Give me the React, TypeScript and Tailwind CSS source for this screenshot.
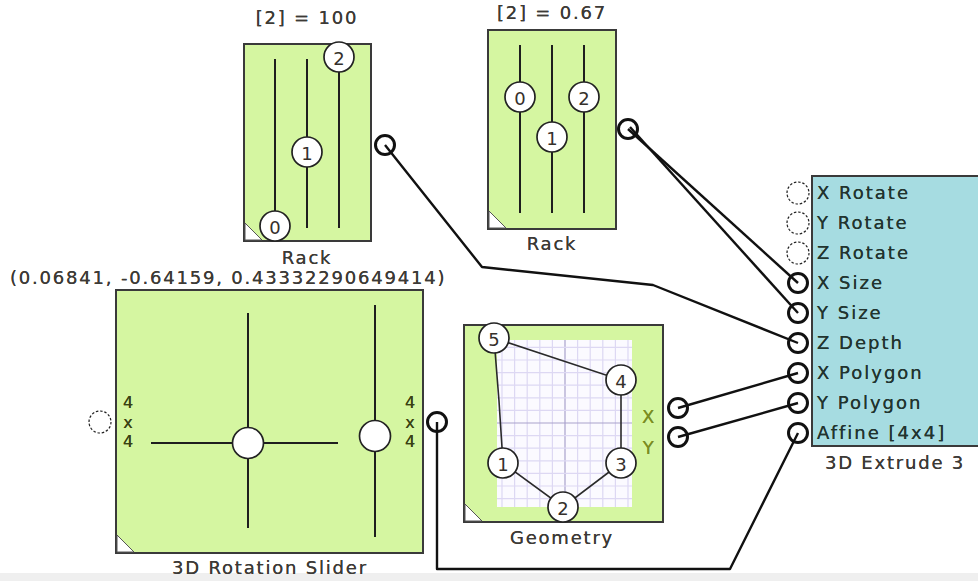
import React from "react";

const SVGFONT = "DejaVu Sans, Verdana, sans-serif";

function Knob({ x, y, label, r = 15 }: { x: number; y: number; label?: string; r?: number }) {
  return (
    <g>
      <circle cx={x} cy={y} r={r} fill="#ffffff" stroke="#222222" strokeWidth={1.7} />
      {label ? (
        <text x={x} y={y + 1} textAnchor="middle" dominantBaseline="central" fontSize={18} fill="#35302b" fontFamily={SVGFONT}>
          {label}
        </text>
      ) : null}
    </g>
  );
}

function Corner({ h }: { h: number }) {
  return <path d={`M0 ${h - 17} L17 ${h} L0 ${h} Z`} fill="#ffffff" stroke="#555555" strokeWidth={1} />;
}

function SliderLine({ x, y1, y2 }: { x: number; y1: number; y2: number }) {
  return <line x1={x} y1={y1} x2={x} y2={y2} stroke="#1e1e1e" strokeWidth={2} />;
}

function Rack1() {
  return (
    <div className="absolute left-[243px] top-[43px] w-[129px] h-[199px] border-2 border-[#3a3a3a] bg-[#d5f6a1]">
      <svg width={125} height={195} className="absolute left-0 top-0 overflow-visible">
        <Corner h={195} />
        <SliderLine x={30} y1={14} y2={183} />
        <SliderLine x={62} y1={14} y2={183} />
        <SliderLine x={94} y1={14} y2={183} />
        <Knob x={94} y={12} label="2" />
        <Knob x={62} y={107} label="1" />
        <Knob x={30} y={181} label="0" />
      </svg>
    </div>
  );
}

function Rack2() {
  return (
    <div className="absolute left-[487px] top-[29px] w-[130px] h-[201px] border-2 border-[#3a3a3a] bg-[#d5f6a1]">
      <svg width={126} height={197} className="absolute left-0 top-0 overflow-visible">
        <Corner h={197} />
        <SliderLine x={31} y1={14} y2={182} />
        <SliderLine x={63} y1={14} y2={182} />
        <SliderLine x={95} y1={14} y2={182} />
        <Knob x={31} y={66} label="0" />
        <Knob x={63} y={106} label="1" />
        <Knob x={95} y={66} label="2" />
      </svg>
    </div>
  );
}

function FourByFour() {
  return (
    <div className="flex flex-col items-center w-[16px] text-[16px] leading-[19.5px] text-[#3a4214] [text-shadow:0_0_0.6px_#3a4214]">
      <span>4</span>
      <span>x</span>
      <span>4</span>
    </div>
  );
}

function RotationSlider() {
  return (
    <div className="absolute left-[115px] top-[289px] w-[309px] h-[265px] border-2 border-[#3a3a3a] bg-[#d5f6a1]">
      <svg width={305} height={261} className="absolute left-0 top-0 overflow-visible">
        <Corner h={261} />
        <line x1={131} y1={22} x2={131} y2={237} stroke="#1e1e1e" strokeWidth={2} />
        <line x1={34} y1={152} x2={221} y2={152} stroke="#1e1e1e" strokeWidth={2} />
        <SliderLine x={258} y1={14} y2={246} />
        <Knob x={131} y={152} r={15.5} />
        <Knob x={258} y={145} r={15.5} />
      </svg>
      <div className="absolute left-[3px] right-[4px] top-[102px] flex justify-between">
        <FourByFour />
        <FourByFour />
      </div>
    </div>
  );
}

function Geometry() {
  const gx0 = 32;
  const gx1 = 167;
  const gy0 = 14;
  const gy1 = 181;
  const ax = 100;
  const ay = 97;
  const step = 12.6;
  const vlines: number[] = [];
  for (let k = -6; k <= 6; k++) {
    const v = ax + k * step;
    if (v > gx0 && v < gx1) vlines.push(v);
  }
  const hlines: number[] = [];
  for (let k = -7; k <= 7; k++) {
    const v = ay + k * step;
    if (v > gy0 && v < gy1) hlines.push(v);
  }
  const pts: [number, number, string][] = [
    [38, 137, "1"],
    [98, 181, "2"],
    [156, 137, "3"],
    [156, 54, "4"],
    [29, 12, "5"],
  ];
  return (
    <div className="absolute left-[463px] top-[324px] w-[201px] h-[199px] border-2 border-[#3a3a3a] bg-[#d5f6a1]">
      <svg width={197} height={195} className="absolute left-0 top-0 overflow-visible">
        <rect x={gx0} y={gy0} width={gx1 - gx0} height={gy1 - gy0} fill="#fbfaff" />
        {vlines.map((v) => (
          <line key={"v" + v} x1={v} y1={gy0} x2={v} y2={gy1} stroke={v === ax ? "#a9a2cc" : "#ddd8f3"} strokeWidth={1.2} />
        ))}
        {hlines.map((v) => (
          <line key={"h" + v} x1={gx0} y1={v} x2={gx1} y2={v} stroke={v === ay ? "#a9a2cc" : "#ddd8f3"} strokeWidth={1.2} />
        ))}
        <Corner h={195} />
        <polyline
          points="38,137 98,181 156,137 156,54 29,12 34,75 38,137"
          fill="none"
          stroke="#2a2a2a"
          strokeWidth={1.6}
        />
        {pts.map(([x, y, l]) => (
          <Knob key={l} x={x} y={y} label={l} />
        ))}
      </svg>
      <div className="absolute left-[177px] top-[75px] flex flex-col items-center text-[18px] leading-[31px] text-[#7b8d22] [text-shadow:0_0_0.6px_#7b8d22]">
        <span>X</span>
        <span>Y</span>
      </div>
    </div>
  );
}

function Extrude() {
  const rows = ["X Rotate", "Y Rotate", "Z Rotate", "X Size", "Y Size", "Z Depth", "X Polygon", "Y Polygon", "Affine [4x4]"];
  return (
    <div className="absolute left-[811px] top-[175px] w-[190px] h-[272px] border-2 border-[#3a3a3a] bg-[#a6dce1] pt-[1px] pl-[4px] flex flex-col">
      {rows.map((r) => (
        <div key={r} className="h-[30px] leading-[30px] text-[18px] tracking-[2px] text-[#22342f] whitespace-nowrap [text-shadow:0_0_0.6px_#22342f]">
          {r}
        </div>
      ))}
    </div>
  );
}

function Wires() {
  const ws = "#111111";
  return (
    <svg width={978} height={573} className="absolute left-0 top-0 pointer-events-none">
      <g fill="none" stroke={ws} strokeWidth={2.4} strokeLinejoin="round">
        <polyline points="628,129 798,283" />
        <polyline points="630,127 798,313" />
        <polyline points="385,145 482,267 653,285 798,343" />
        <polyline points="678,408 798,373" />
        <polyline points="678,437 798,403" />
        <polyline points="437,422 437,569 730,569 798,433" />
      </g>
      <g fill="none" stroke={ws} strokeWidth={3}>
        <circle cx={385} cy={145} r={9.5} />
        <circle cx={628} cy={129} r={9.5} />
        <circle cx={437} cy={422} r={9.5} />
        <circle cx={678} cy={408} r={9.5} />
        <circle cx={678} cy={437} r={9.5} />
        <circle cx={798} cy={283} r={9.5} />
        <circle cx={798} cy={313} r={9.5} />
        <circle cx={798} cy={343} r={9.5} />
        <circle cx={798} cy={373} r={9.5} />
        <circle cx={798} cy={403} r={9.5} />
        <circle cx={798} cy={433} r={9.5} />
      </g>
      <g fill="#ffffff" stroke="#222222" strokeWidth={1.2} strokeDasharray="2.5 1.8">
        <circle cx={798} cy={193} r={11} />
        <circle cx={798} cy={223} r={11} />
        <circle cx={798} cy={253} r={11} />
        <circle cx={100} cy={422} r={11} />
      </g>
    </svg>
  );
}

const label = "absolute -translate-x-1/2 whitespace-nowrap text-[18px] leading-[18px] tracking-[1.8px] text-[#3d3a36] [text-shadow:0_0_0.6px_#3d3a36]";

export default function App() {
  return (
    <div className="w-[978px] h-[581px] flex flex-col bg-white overflow-hidden font-['DejaVu_Sans',Verdana,sans-serif]">
      <div className="relative h-[573px] shrink-0">
        <div className={`${label} left-[307px] top-[9px]`}>[2] = 100</div>
        <div className={`${label} left-[552px] top-[4px]`}>[2] = 0.67</div>
        <Rack1 />
        <Rack2 />
        <div className={`${label} left-[552px] top-[235px]`}>Rack</div>
        <div className={`${label} left-[307px] top-[249px]`}>Rack</div>
        <div className="absolute left-[10px] top-[269px] whitespace-nowrap text-[18px] leading-[18px] tracking-[1.8px] text-[#3d3a36] [text-shadow:0_0_0.6px_#3d3a36]">
          (0.06841, -0.64159, 0.43332290649414)
        </div>
        <RotationSlider />
        <div className={`${label} left-[270px] top-[559px]`}>3D Rotation Slider</div>
        <Geometry />
        <div className={`${label} left-[562px] top-[529px]`}>Geometry</div>
        <Extrude />
        <div className={`${label} left-[895px] top-[454px]`}>3D Extrude 3</div>
        <Wires />
      </div>
      <div className="flex-1 bg-[#efefef]" />
    </div>
  );
}
